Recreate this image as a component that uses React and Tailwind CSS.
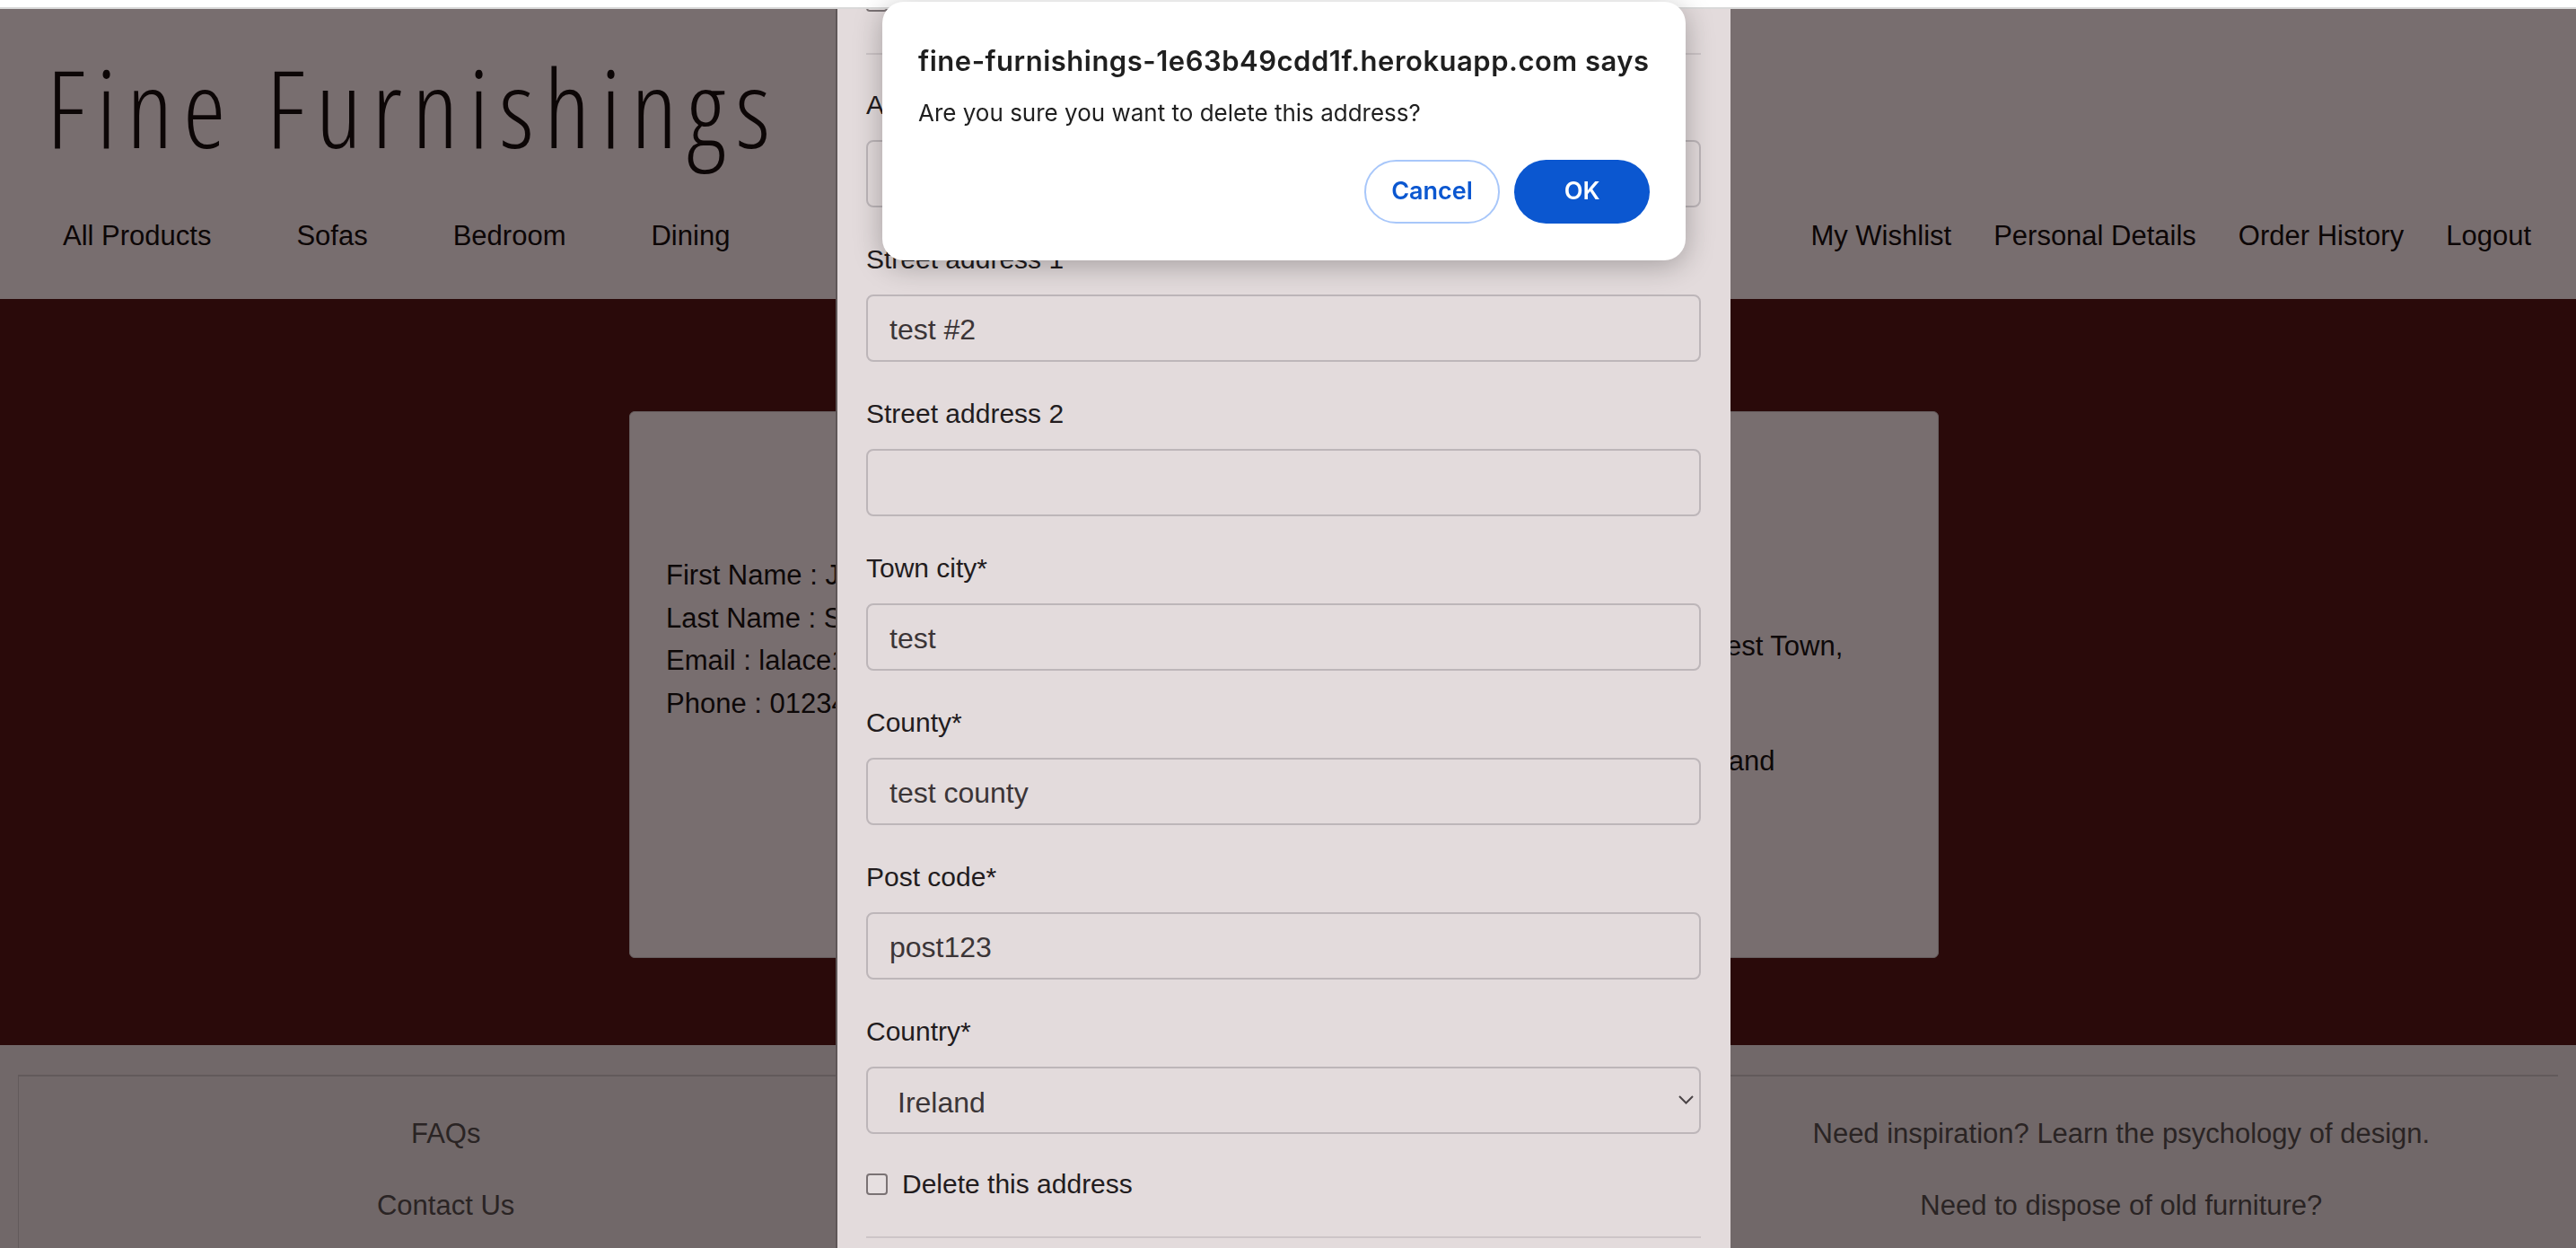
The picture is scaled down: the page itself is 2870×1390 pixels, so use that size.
import React from "react";

const leftLinks = ["All Products", "Sofas", "Bedroom", "Dining"];
const rightLinks = ["My Wishlist", "Personal Details", "Order History", "Logout"];

const fields = [
  { label: "Address name", value: "" },
  { label: "Street address 1", value: "test #2" },
  { label: "Street address 2", value: "" },
  { label: "Town city*", value: "test" },
  { label: "County*", value: "test county" },
  { label: "Post code*", value: "post123" },
];

function DeleteRow() {
  return (
    <label className="flex items-center gap-[16px] h-[24px] text-[30px] text-[#221c1e]">
      <input
        type="checkbox"
        readOnly
        className="appearance-none w-[24px] h-[24px] rounded-[4px] border-2 border-[#7a7274] bg-[#e6dfe0]"
      />
      <span className="leading-[40px]">Delete this address</span>
    </label>
  );
}

function Field({ label, value }) {
  return (
    <div className="flex flex-col">
      <label className="text-[30px] leading-[40px] text-[#221c1e]">{label}</label>
      <input
        readOnly
        value={value}
        className="mt-[19px] h-[75px] w-full rounded-[8px] border-2 border-[#bdb6b9] bg-transparent px-[24px] pt-[4px] text-[32px] text-[#3b3537] outline-none"
      />
    </div>
  );
}

export default function App() {
  return (
    <div className="relative h-screen overflow-hidden bg-white font-['Liberation_Sans',Arial,sans-serif]">
      <div className="h-[8px] bg-white" />
      <div className="h-[2px] bg-[#d9d9d9]" />

      <header className="bg-[#786e6f] h-[323px] flex flex-col text-[#0c0606]">
        <h1 className="pl-[52px] pt-[49px] text-[120px] leading-none font-light [font-stretch:87%] tracking-[11.5px] whitespace-nowrap font-['Open_Sans',sans-serif]">
          Fine Furnishings
        </h1>
        <nav className="mt-auto mb-[46px] flex justify-between text-[31px] leading-[48px]">
          <ul className="flex gap-[95px] pl-[70px]">
            {leftLinks.map((l) => (
              <li key={l}>{l}</li>
            ))}
          </ul>
          <ul className="flex gap-[47px] pr-[50px]">
            {rightLinks.map((l) => (
              <li key={l}>{l}</li>
            ))}
          </ul>
        </nav>
      </header>

      <main className="bg-[#2a0a0a] h-[831px] pt-[125px] flex justify-center pr-[9px]">
        <section className="w-[1459px] h-[609px] bg-[#786e6f] border border-[#665d5e] rounded-[6px] flex px-[40px] text-[31px] leading-[47.5px] text-[#0d0808]">
          <div className="w-1/2 pt-[158px]">
            <p>First Name : Jane</p>
            <p>Last Name : Smith</p>
            <p>Email : lalace123@gmail.com</p>
            <p>Phone : 0123456789</p>
          </div>
          <div className="w-1/2 pt-[237px] pl-[130px] flex flex-col gap-[16.5px]">
            <p>Address : 12 Test Street, Test Town,</p>
            <p>Eircode</p>
            <p className="pl-[16px]">Test County, post123, Ireland</p>
          </div>
        </section>
      </main>

      <footer className="bg-[#716869] pt-[33px] px-[20px] h-[400px]">
        <div className="h-full border-t-2 border-l border-[#625a5b] grid grid-cols-3 text-center pt-[40px] pl-[9px] pr-[20px] text-[31px] leading-[48px] text-[#2a2424]">
          <ul className="flex flex-col gap-[32px]">
            <li>FAQs</li>
            <li>Contact Us</li>
          </ul>
          <ul className="flex flex-col gap-[32px]">
            <li>Delivery Information</li>
            <li>Returns Policy</li>
          </ul>
          <ul className="flex flex-col gap-[32px]">
            <li>Need inspiration? Learn the psychology of design.</li>
            <li>Need to dispose of old furniture?</li>
          </ul>
        </div>
      </footer>

      {/* address modal, scrolled to second address */}
      <div className="fixed top-[10px] bottom-0 left-[931px] w-[997px] bg-[#e3dbdc] border-l-2 border-[#5f5758] overflow-hidden">
        <div className="-mt-[21px] pl-[32px] pr-[33px] flex flex-col">
          <DeleteRow />
          <hr className="mt-[46px] border-t-2 border-[#cdc5c7]" />
          <div className="mt-[36px] flex flex-col gap-[38px]">
            {fields.map((f) => (
              <Field key={f.label} label={f.label} value={f.value} />
            ))}
            <div className="flex flex-col">
              <label className="text-[30px] leading-[40px] text-[#221c1e]">Country*</label>
              <div className="relative mt-[19px]">
                <select
                  defaultValue="IE"
                  className="appearance-none h-[75px] w-full rounded-[8px] border-2 border-[#bdb6b9] bg-transparent px-[33px] pt-[4px] text-[32px] text-[#3b3537] outline-none"
                >
                  <option value="IE">Ireland</option>
                </select>
                <svg
                  className="absolute right-[8px] top-[32px] pointer-events-none"
                  width="17"
                  height="10"
                  viewBox="0 0 17 10"
                  fill="none"
                >
                  <path d="M1 1l7.5 7.5L16 1" stroke="#4a4446" strokeWidth="2" />
                </svg>
              </div>
            </div>
          </div>
          <div className="mt-[44px]">
            <DeleteRow />
          </div>
          <hr className="mt-[46px] border-t-2 border-[#cdc5c7]" />
        </div>
      </div>

      {/* browser confirm dialog */}
      <div className="fixed top-[2px] left-[983px] w-[895px] h-[288px] bg-white rounded-[24px] shadow-[0_6px_32px_rgba(0,0,0,0.28)] px-[40px] font-['Inter',sans-serif] text-[#1f1f1f]">
        <h2 className="pt-[46px] text-[31px] leading-[40px] tracking-[0.5px] font-semibold whitespace-nowrap">
          fine-furnishings-1e63b49cdd1f.herokuapp.com says
        </h2>
        <p className="mt-[22px] text-[26px] leading-[32px]">Are you sure you want to delete this address?</p>
        <div className="mt-[36px] flex justify-end gap-[16px]">
          <button className="w-[151px] h-[71px] rounded-full border-2 border-[#a8c7fa] text-[#0b57d0] text-[27px] font-semibold">
            Cancel
          </button>
          <button className="w-[151px] h-[71px] rounded-full bg-[#0b57d0] text-white text-[27px] font-semibold">
            OK
          </button>
        </div>
      </div>
    </div>
  );
}
